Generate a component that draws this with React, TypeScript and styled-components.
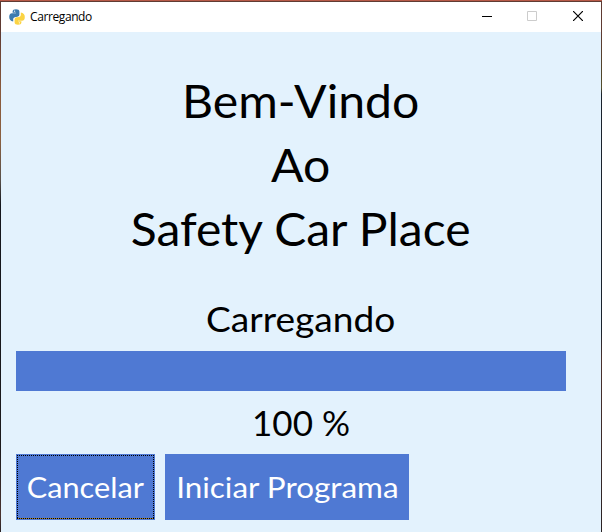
import React from "react";
import styled, { createGlobalStyle } from "styled-components";

const GlobalStyle = createGlobalStyle`
  * { box-sizing: border-box; }
  html, body { margin: 0; padding: 0; }
`;

const Desktop = styled.div`
  width: 602px;
  height: 532px;
  overflow: hidden;
  padding: 2px 1px 0;
  background:
    linear-gradient(#b85a48, #b85a48) 0 0 / 100% 1px no-repeat,
    linear-gradient(#603c34, #603c34) 0 1px / 100% 1px no-repeat,
    linear-gradient(#5e3a32 0, #5e3a32 30px, #8a5a3c 90px, #8a6040 140px, #58504a 180px, #14161c 205px, #1c1a1c 450px, #4a3430 515px, #2a2224 532px) 0 0 / 1px 100% no-repeat,
    linear-gradient(#5e3a32 0, #5e3a32 30px, #50452a 75px, #55502e 88px, #1a222c 94px, #1a222c 330px, #4a302c 360px, #2a2224 532px) 100% 0 / 1px 100% no-repeat;
`;

const Window = styled.main`
  display: flex;
  flex-direction: column;
  height: 530px;
  background: #e3f2fd;
  color: #000;
  font-family: Lato, "Open Sans", sans-serif;
`;

const TitleBar = styled.header`
  display: flex;
  align-items: center;
  height: 30px;
  flex: none;
  padding-left: 8px;
  background: #fff;
`;

const WindowTitle = styled.span`
  flex: 1;
  margin-left: 5px;
  font: 12px/16px "Open Sans", sans-serif;
  letter-spacing: -0.4px;
`;

const ControlButton = styled.button<{ $width?: number }>`
  display: grid;
  place-items: center;
  align-self: flex-start;
  width: ${(p) => p.$width ?? 46}px;
  height: 28px;
  padding: 0;
  border: 0;
  background: none;
  color: #000;

  &:disabled { color: #ccc; }
`;

const Content = styled.section`
  display: flex;
  flex-direction: column;
  padding: 36px 15px 0;
`;

const Line = styled.div<{ $size: number; $height: number }>`
  display: flex;
  justify-content: center;
  width: 570px;
  font-size: ${(p) => p.$size}px;
  line-height: ${(p) => p.$height}px;
`;

const Fitted = styled.span<{ $scale?: number }>`
  display: inline-block;
  white-space: pre;
  transform: scaleX(${(p) => p.$scale ?? 1});
`;

const Status = styled.div`
  margin-top: 28px;
`;

const ProgressBar = styled.div`
  width: 550px;
  height: 40px;
  margin: 2px 0 6px;
  background: #4f79d3;
`;

const Actions = styled.div`
  display: flex;
  gap: 10px;
  margin-top: 7px;
`;

const ActionButton = styled.button<{ $width: number }>`
  display: flex;
  align-items: center;
  justify-content: center;
  position: relative;
  width: ${(p) => p.$width}px;
  height: 66px;
  padding: 0;
  border: 0;
  background: #4f79d3;
  color: #fff;
  font: 29.5px/40px Lato, sans-serif;
`;

const FocusRing = styled.svg`
  position: absolute;
  left: 1px;
  top: 1px;
`;

const PythonLogo = () => (
  <svg width="16" height="16" viewBox="0 0 16 16">
    <path fill="#3b7bb0" d="M3.6 2.4Q3.8.2 7 .2T10.4 2.4v3.4Q10.4 7.4 8.4 7.8L5.8 8.2Q4.2 8.6 4.2 10v2.4Q.2 11.8.2 8T3 4.2h4V3.8H3.6Z" />
    <path fill="#fbd343" d="M12.4 13.6q-.2 2.2-3.4 2.2T5.6 13.6v-3.4q0-1.6 2-1.9l2.6-.4Q11.8 7.4 11.8 6V3.6q4 .6 4 4.4T13 11.8H9v.4h3.4Z" />
    <circle cx="5.6" cy="2.2" r=".6" fill="#fff" />
    <circle cx="10.4" cy="13.8" r=".6" fill="#fff" />
  </svg>
);

export default function App() {
  return (
    <>
      <GlobalStyle />
      <Desktop>
        <Window>
          <TitleBar>
            <PythonLogo />
            <WindowTitle>Carregando</WindowTitle>
            <ControlButton aria-label="Minimizar" $width={44}>
              <svg width="10" height="10"><path d="M0 5.5h10" stroke="currentColor" /></svg>
            </ControlButton>
            <ControlButton aria-label="Maximizar" disabled>
              <svg width="10" height="10"><path d="M.5.5h9v9h-9z" fill="none" stroke="currentColor" /></svg>
            </ControlButton>
            <ControlButton aria-label="Fechar">
              <svg width="10" height="10"><path d="M0 0l10 10M10 0L0 10" stroke="currentColor" strokeWidth="1.2" /></svg>
            </ControlButton>
          </TitleBar>
          <Content>
            <Line $size={46.5} $height={64}><Fitted $scale={1.035}>Bem-Vindo</Fitted></Line>
            <Line $size={46.5} $height={64}><Fitted $scale={1.035}>Ao</Fitted></Line>
            <Line $size={46.5} $height={64}><Fitted $scale={1.032}>Safety Car Place</Fitted></Line>
            <Status>
              <Line $size={35.5} $height={61}><Fitted $scale={1.045}>Carregando</Fitted></Line>
              <ProgressBar role="progressbar" aria-valuenow={100} />
              <Line $size={35} $height={50}><Fitted>100 %</Fitted></Line>
            </Status>
            <Actions>
              <ActionButton $width={139}>
                <Fitted $scale={1.04}>Cancelar</Fitted>
                <FocusRing width="137" height="64" shapeRendering="crispEdges">
                  <path d="M0 63.5h137" stroke="#b08628" />
                  <path d="M0 .5h137M0 63.5h137M.5 0v64M136.5 0v64" stroke="#000" strokeDasharray="1 1" />
                </FocusRing>
              </ActionButton>
              <ActionButton $width={244}><Fitted $scale={1.065}>Iniciar Programa</Fitted></ActionButton>
            </Actions>
          </Content>
        </Window>
      </Desktop>
    </>
  );
}
